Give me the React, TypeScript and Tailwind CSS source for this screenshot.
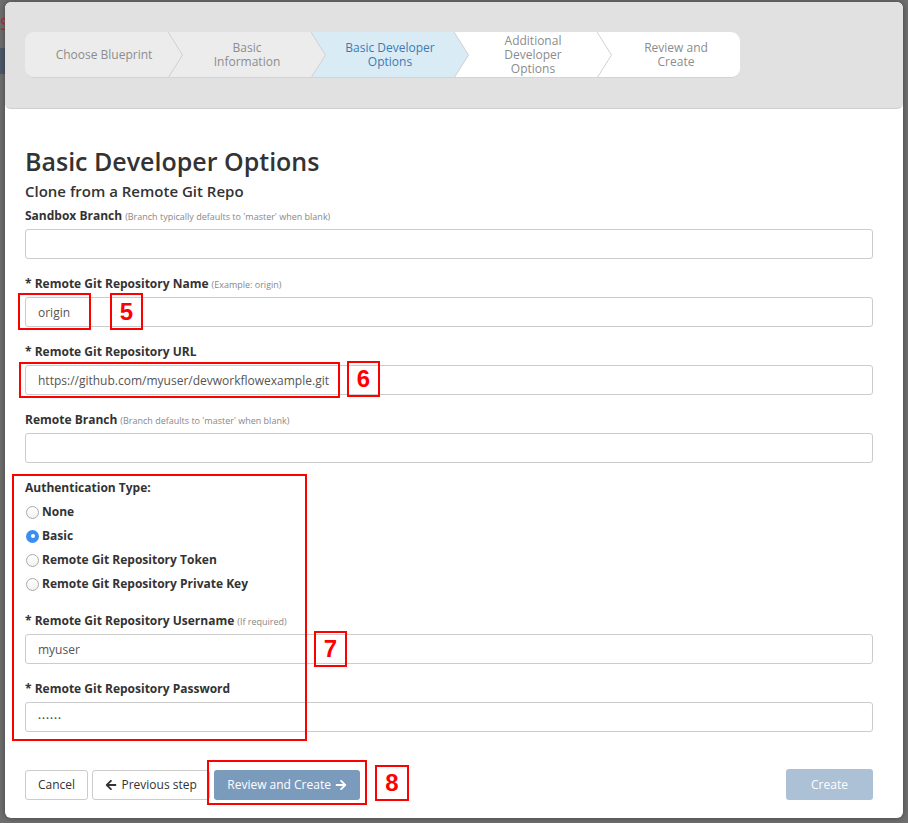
import { FaArrowLeft, FaArrowRight } from 'react-icons/fa'

type StepState = 'done' | 'active' | 'todo'

const steps: { lines: string[]; state: StepState; z: string }[] = [
  { lines: ['Choose Blueprint'], state: 'done', z: 'z-[5]' },
  { lines: ['Basic', 'Information'], state: 'done', z: 'z-[4]' },
  { lines: ['Basic Developer', 'Options'], state: 'active', z: 'z-[3]' },
  { lines: ['Additional', 'Developer', 'Options'], state: 'todo', z: 'z-[2]' },
  { lines: ['Review and', 'Create'], state: 'todo', z: 'z-[1]' }
]

const stepFill: Record<StepState, string> = {
  done: '#ececec',
  active: '#d9ecf5',
  todo: '#ffffff'
}

function Stepper() {
  return (
    <div className="flex h-[46px] w-[715px] overflow-hidden rounded-[9px] border-b border-[#d4d4d4]">
      {steps.map((step, i) => (
        <div
          key={i}
          className={
            'relative flex h-full w-[143px] flex-col items-center justify-center pl-[15px] text-center text-[12px] leading-[14px] ' +
            step.z +
            ' ' +
            (step.state === 'done'
              ? 'bg-[#ececec] text-[#8c8c8c]'
              : step.state === 'active'
                ? 'bg-[#d9ecf5] text-[#3d7ab3]'
                : 'bg-white text-[#8c8c8c]')
          }
        >
          {step.lines.map(l => (
            <span key={l} className="block h-[14px]">
              {l}
            </span>
          ))}
          {i < steps.length - 1 && (
            <svg className="absolute left-full top-0 h-[46px] w-[15px]" viewBox="0 0 15 46">
              <polygon points="0,0 15,23 0,46" fill={stepFill[step.state]} />
              <polyline points="0,0 14.5,23 0,46" fill="none" stroke="#d0d0d0" strokeWidth="1" />
            </svg>
          )}
        </div>
      ))}
    </div>
  )
}

function Field({
  label,
  hint,
  value,
  type = 'text'
}: {
  label: string
  hint?: string
  value?: string
  type?: string
}) {
  return (
    <div className="mb-[16px]">
      <div className="mb-[5px] h-[17px] text-[12px] leading-[17px] text-[#333]">
        <span className="font-bold">{label}</span>
        {hint && <span className="ml-[3px] text-[9px] text-[#888]">{hint}</span>}
      </div>
      <input
        type={type}
        readOnly
        value={value ?? ''}
        className={
          'block h-[30px] w-full rounded-[3px] border border-[#cccccc] bg-white px-[12px] text-[#555] outline-none ' +
          (type === 'password' ? 'text-[8px] tracking-[1px]' : 'text-[12px]')
        }
      />
    </div>
  )
}

function Radio({ label, checked }: { label: string; checked?: boolean }) {
  return (
    <div className="flex h-[24px] items-center">
      {checked ? (
        <span className="ml-[1px] flex h-[13px] w-[13px] items-center justify-center rounded-full bg-[#3b8ef0]">
          <span className="h-[4px] w-[4px] rounded-full bg-white" />
        </span>
      ) : (
        <span className="ml-[1px] h-[13px] w-[13px] rounded-full border border-[#a9a9a9] bg-gradient-to-b from-white to-[#f2f2f2]" />
      )}
      <span className="ml-[3px] text-[12px] font-bold text-[#333]">{label}</span>
    </div>
  )
}

function Mark({ className }: { className: string }) {
  return <div className={'absolute border-2 border-[#ff0000] ' + className} />
}

function Num({ n, className }: { n: string; className: string }) {
  return (
    <div
      className={
        "absolute flex items-center justify-center border-2 border-[#ff0000] font-['Liberation_Sans',Arial,sans-serif] text-[24px] font-bold text-[#ff0000] " +
        className
      }
    >
      {n}
    </div>
  )
}

export default function App() {
  return (
    <div className="relative h-[823px] w-[908px] overflow-hidden bg-[#6f6f6f] pl-[5px] pt-[2px] font-['Open_Sans',sans-serif]">
      {/* page behind the dialog */}
      <div className="absolute left-0 top-[14px] text-[16px] leading-[20px] text-[#b03030]">S</div>
      <div className="absolute left-0 top-[48px] h-[26px] w-[5px] bg-[#4c5a68]" />

      <div className="relative flex h-[816px] w-[898px] flex-col overflow-hidden rounded-[6px] bg-white shadow-[0_0_6px_rgba(0,0,0,0.4)]">
        <div className="h-[107px] shrink-0 rounded-[6px] border-b border-[#cfcfcf] bg-[#e1e1e1] pl-[20px] pt-[30px]">
          <Stepper />
        </div>

        <div className="flex flex-1 flex-col pl-[20px] pr-[30px] pt-[37px]">
          <h1 className="h-[30px] text-[25px] font-semibold leading-[30px] text-[#333]">Basic Developer Options</h1>
          <h2 className="mt-[4px] h-[22px] text-[15px] font-semibold leading-[22px] text-[#333]">
            Clone from a Remote Git Repo
          </h2>
          <div className="mt-[5px]">
            <Field label="Sandbox Branch" hint="(Branch typically defaults to 'master' when blank)" />
            <Field label="* Remote Git Repository Name" hint="(Example: origin)" value="origin" />
            <Field label="* Remote Git Repository URL" value="https://github.com/myuser/devworkflowexample.git" />
            <Field label="Remote Branch" hint="(Branch defaults to 'master' when blank)" />

            <div className="h-[17px] text-[12px] font-bold leading-[17px] text-[#333]">Authentication Type:</div>
            <div className="mt-[4px]">
              <Radio label="None" />
              <Radio label="Basic" checked />
              <Radio label="Remote Git Repository Token" />
              <Radio label="Remote Git Repository Private Key" />
            </div>
            <div className="mt-[16px]">
              <Field label="* Remote Git Repository Username" hint="(If required)" value="myuser" />
              <Field label="* Remote Git Repository Password" value="secret" type="password" />
            </div>
          </div>

          <div className="mt-[21px] flex items-center text-[12px]">
            <button className="h-[30px] rounded-[3px] border border-[#cccccc] bg-white px-[12px] text-[#333]">
              Cancel
            </button>
            <button className="ml-[4px] flex h-[30px] w-[118px] items-center justify-center gap-[4px] rounded-[3px] border border-[#cccccc] bg-white text-[#333]">
              <FaArrowLeft className="h-[12px] w-[12px]" />
              Previous step
            </button>
            <button className="ml-[4px] flex h-[30px] w-[146px] items-center justify-center gap-[4px] rounded-[3px] bg-[#7b9bbd] text-white">
              Review and Create
              <FaArrowRight className="h-[12px] w-[12px]" />
            </button>
            <button className="ml-auto h-[31px] w-[87px] rounded-[3px] bg-[#acc0d6] text-white">Create</button>
          </div>
        </div>
      </div>

      {/* annotations */}
      <Mark className="left-[18px] top-[293px] h-[37px] w-[73px]" />
      <Num n="5" className="left-[110px] top-[293px] h-[37px] w-[33px]" />
      <Mark className="left-[19px] top-[362px] h-[36px] w-[321px]" />
      <Num n="6" className="left-[347px] top-[361px] h-[36px] w-[33px]" />
      <Mark className="left-[12px] top-[474px] h-[267px] w-[295px]" />
      <Num n="7" className="left-[314px] top-[631px] h-[36px] w-[33px]" />
      <Mark className="left-[207px] top-[760px] h-[45px] w-[160px]" />
      <Num n="8" className="left-[375px] top-[765px] h-[36px] w-[34px]" />
    </div>
  )
}
